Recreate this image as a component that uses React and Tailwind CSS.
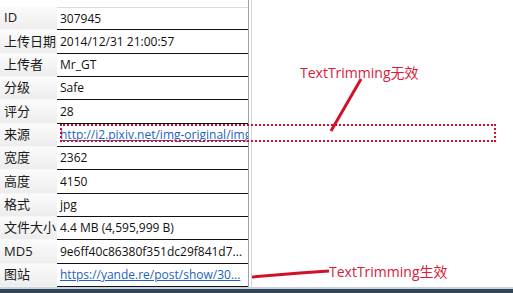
import React from 'react';

const rows = [
  { label: 'ID', value: '307945' },
  { label: '上传日期', value: '2014/12/31 21:00:57' },
  { label: '上传者', value: 'Mr_GT' },
  { label: '分级', value: 'Safe' },
  { label: '评分', value: '28' },
  { label: '来源', value: 'http://i2.pixiv.net/img-original/img/2014/12/31/20/58/01/47798621_p0.jpg', link: true },
  { label: '宽度', value: '2362' },
  { label: '高度', value: '4150' },
  { label: '格式', value: 'jpg' },
  { label: '文件大小', value: '4.4 MB (4,595,999 B)' },
  { label: 'MD5', value: '9e6ff40c86380f351dc29f841d7...' },
  { label: '图站', value: 'https://yande.re/post/show/30...', link: true },
];

const font = { fontFamily: '"Open Sans", "Noto Sans CJK SC", sans-serif' };

const InfoRow = ({ row, index }) => {
  const tall = index % 3 === 1;
  return (
    <div className={`flex ${tall ? 'h-[24px]' : 'h-[23px]'}`}>
      <div className="w-[57px] shrink-0 flex items-center pl-[4px] bg-gradient-to-b from-[#fbfbfb] to-[#ededed] border-b border-[#f6f6f6] text-[13px] text-[#1a1a1a] whitespace-nowrap">
        {row.label}
      </div>
      <div
        className={`flex-1 min-w-0 flex items-center pl-[3px] bg-white border-b border-[#111] text-[12px] whitespace-nowrap overflow-hidden
          ${index === 0 ? 'border-t border-t-[#d4dde3]' : ''}`}
      >
        <span className={row.link ? 'text-[#1f5fc0] underline' : 'text-[#111]'}>{row.value}</span>
      </div>
    </div>
  );
};

export default function App() {
  return (
    <div className="relative w-[513px] h-[293px] bg-white overflow-hidden" style={font}>
      <div className="flex h-[287px]">
        <div className="w-[249px] pt-[7px] border-r border-[#9ca3a9]">
          {rows.map((row, i) => (
            <InfoRow key={row.label} row={row} index={i} />
          ))}
        </div>
        <div className="w-[2px]" />
        <div className="w-px bg-[#d3d8dc]" />
        <div className="flex-1" />
      </div>
      <div className="h-[2px] bg-[#c9d3dc]" />
      <div className="h-[4px] bg-[#34465a]" />

      {/* annotations */}
      <div className="absolute left-[60px] top-[124px] w-[436px] h-[18px] border-2 border-dotted border-[#d2102c]" />
      <div className="absolute left-[300px] top-[62px] text-[14px] text-[#d8203c] whitespace-nowrap">
        TextTrimming无效
      </div>
      <div className="absolute left-[329px] top-[261px] text-[14px] text-[#d8203c] whitespace-nowrap">
        TextTrimming生效
      </div>
      <svg className="absolute left-0 top-0" width="513" height="293">
        <line x1="361" y1="79" x2="331" y2="131" stroke="#d2102c" strokeWidth="3" />
        <polyline points="252,277 300,273 329,271" fill="none" stroke="#d2102c" strokeWidth="3" />
      </svg>
    </div>
  );
}
